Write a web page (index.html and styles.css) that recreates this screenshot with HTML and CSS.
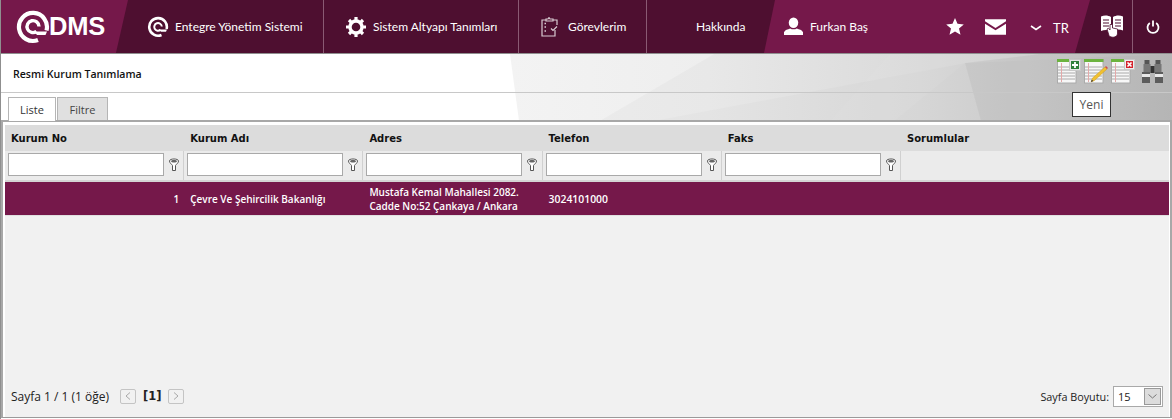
FILE: index.html
```html
<!DOCTYPE html>
<html lang="tr">
<head>
<meta charset="utf-8">
<title>Resmi Kurum Tanımlama</title>
<link rel="stylesheet" href="styles.css">
</head>
<body>
<header class="topbar">
  <a class="logo"><svg class="logo-mark" width="34" height="34" viewBox="0 0 34 34" fill="none" stroke="#fff"><path d="M22 30A14 14 0 1 1 30.500 20.500" stroke-width="4.200"/><path d="M20.500 21.500A6 6 0 1 1 23 16.500" stroke-width="3.400"/><path d="M18 21.500h13l-1.500 3.500H21z" fill="#fff" stroke="none"/></svg><span class="logo-text">DMS</span></a>
  <nav class="mainnav">
    <a class="navitem nav-a"><svg width="22" height="22" viewBox="0 0 22 22" fill="none" stroke="#fff"><path d="M14.500 19A8.800 8.800 0 1 1 19.600 13" stroke-width="2.600"/><path d="M13.500 13.800A3.800 3.800 0 1 1 14.800 10.500" stroke-width="2"/><path d="M11.500 13.500h8.500l-1 2.300h-5z" fill="#fff" stroke="none"/></svg><span>Entegre Yönetim Sistemi</span></a>
    <a class="navitem nav-b"><svg width="20" height="20" viewBox="0 0 20 20"><circle cx="10" cy="10" r="6" fill="none" stroke="#fff" stroke-width="3.400"/><g stroke="#fff" stroke-width="3.200"><path d="M10 0v4M10 16v4M0 10h4M16 10h4M3 3l2.800 2.800M14.200 14.200L17 17M3 17l2.800-2.800M14.200 5.800L17 3"/></g></svg><span>Sistem Altyapı Tanımları</span></a>
    <a class="navitem nav-c"><svg width="18" height="20" viewBox="0 0 18 20" fill="none" stroke="#d9ccd3" stroke-width="1.200"><path d="M5 3H1v16h13v-6M12 3h4v5M5 4V2h2l1-1.400 1 1.400h3v2z"/><path d="M3.500 6.500h1.500M3.500 10h1.500M3.500 14h1.500" stroke-width="1.500"/><path d="M10 11.500l2 2 4-4"/></svg><span>Görevlerim</span></a>
    <a class="navitem nav-d"><span>Hakkında</span></a>
  </nav>
  <div class="userzone">
    <div class="user"><svg width="19" height="19" viewBox="0 0 20 20" fill="#fff"><ellipse cx="10" cy="6" rx="5" ry="5.500"/><path d="M0 19v-3c1-2.500 4-3 6.500-4 2 1.200 5 1.200 7 0 2.500 1 5.500 1.500 6.500 4v3z"/></svg><span>Furkan Baş</span></div>
    <div class="tools">
      <svg width="18" height="17" viewBox="0 0 18 17" fill="#fff"><path d="M9 0l2.500 5.800 6.300.6-4.800 4.100 1.500 6.200L9 13.400l-5.500 3.300L5 10.500.2 6.400l6.300-.6z"/></svg>
      <svg class="mail" width="21" height="16" viewBox="0 0 22 16" fill="#fff"><path d="M0 0h22v2L11 9 0 2z"/><path d="M0 4.500L11 11.500 22 4.500V16H0z"/></svg>
      <svg class="chev" width="12" height="6" viewBox="0 0 12 6" fill="none" stroke="#fff" stroke-width="1.600"><path d="M1 1l5 3.500L11 1"/></svg>
      <span class="lang">TR</span>
    </div>
  </div>
  <a class="bookbtn"><svg width="24" height="25" viewBox="0 0 24 25"><path d="M1 2.500c3-1.500 7-1.500 10 .5v14c-3-1.500-7-1.500-10 0zM13 3c3-2 7-2 10-.5v14c-3-1.500-7-1.500-10 0z" fill="#fff"/><path d="M3 6h6M3 9h6M3 12h6M15 6h6M15 9h6M15 12h6" stroke="#4e0f30" stroke-width="1.200"/><path d="M7 15l1.500-.8 1.500 1.800V10.500h2.500V14l5 1v5c-1 4-7 4-8.500 1.500z" fill="#fff" stroke="#4e0f30" stroke-width=".8"/></svg></a>
  <a class="powerbtn"><svg width="14" height="14" viewBox="0 0 14 14" fill="none" stroke="#fff" stroke-width="1.800"><path d="M7 .5v6"/><path d="M3.800 3a5.500 5.500 0 1 0 6.400 0"/></svg></a>
</header>

<main class="page">
  <svg class="backdrop" viewBox="0 0 1172 89" width="1172" height="89">
    <defs><linearGradient id="fade" x1="510" x2="1172" y1="0" y2="0" gradientUnits="userSpaceOnUse"><stop offset="0" stop-color="#f3f3f3"/><stop offset=".3" stop-color="#eeeeee"/><stop offset=".62" stop-color="#e0e0e0"/><stop offset="1" stop-color="#c6c6c6"/></linearGradient></defs>
    <path d="M510 0H1172V89H522z" fill="url(#fade)"/>
    <path d="M562 89L714 0H1172V89z" fill="#000" opacity=".025"/>
    <path d="M610 75L965 9 1172 0V89H610z" fill="#000" opacity=".015"/>
    <path d="M811 89L890 0H1040L965 9 868 89z" fill="#fff" opacity=".05"/>
    <path d="M965 9L1040 0H1172V89H987z" fill="#000" opacity=".04"/>
  </svg>
  <div class="titlebar">
    <h1>Resmi Kurum Tanımlama</h1>
    <div class="toolbar">
      <svg width="25" height="25" viewBox="0 0 25 25"><use href="#sheet"/><rect x="12.500" y=".5" width="11" height="11" fill="#e8e8e8" stroke="#c8c8c8"/><rect x="14" y="2" width="8" height="8" fill="#2f7f3a"/><path d="M18 3v6M15 6h6" stroke="#fff" stroke-width="1.800"/></svg>
      <svg width="25" height="25" viewBox="0 0 25 25"><use href="#sheet"/><path d="M7 23l1.500-4L21 8l2 2L10.500 21.500z" fill="#f0c030" stroke="#c59010" stroke-width=".4"/><path d="M7 23l.7-2.300 1.700 1.400z" fill="#333"/><path d="M21 8l1-1 2 2-1 1z" fill="#d24a4a"/></svg>
      <svg width="25" height="25" viewBox="0 0 25 25"><use href="#sheet"/><rect x="13.500" y=".5" width="10" height="10" fill="#eee" stroke="#c8c8c8"/><rect x="15" y="2" width="7" height="7" fill="#d4222c"/><path d="M16.500 3.500l4 4M20.500 3.500l-4 4" stroke="#fff" stroke-width="1.600"/></svg>
      <svg class="bino" width="21" height="23" viewBox="0 0 21 23"><rect x="2.500" y="0" width="5" height="4" fill="#555"/><rect x="13.500" y="0" width="5" height="4" fill="#555"/><rect x="1.500" y="4" width="7" height="9" fill="#777"/><rect x="12.500" y="4" width="7" height="9" fill="#777"/><rect x="0" y="12" width="8" height="11" fill="#5c5c5c"/><rect x="13" y="12" width="8" height="11" fill="#5c5c5c"/><rect x="0" y="14" width="8" height="3" fill="#e8e8e8"/><rect x="13" y="14" width="8" height="3" fill="#e8e8e8"/><rect x="8.500" y="6" width="4" height="7" fill="#333"/></svg>
    </div>
  </div>
  <div class="tabs">
    <a class="tab active">Liste</a>
    <a class="tab">Filtre</a>
  </div>
  <div class="tooltip">Yeni</div>
  <section class="panel">
    <div class="grid">
      <div class="row head">
        <div class="cell">Kurum No</div><div class="cell">Kurum Adı</div><div class="cell">Adres</div><div class="cell">Telefon</div><div class="cell">Faks</div><div class="cell">Sorumlular</div>
      </div>
      <div class="row filters">
        <div class="fcell"><input type="text" aria-label="Kurum No"><svg class="funnel"><use href="#funnel"/></svg></div>
        <div class="fcell"><input type="text" aria-label="Kurum Adı"><svg class="funnel"><use href="#funnel"/></svg></div>
        <div class="fcell"><input type="text" aria-label="Adres"><svg class="funnel"><use href="#funnel"/></svg></div>
        <div class="fcell"><input type="text" aria-label="Telefon"><svg class="funnel"><use href="#funnel"/></svg></div>
        <div class="fcell"><input type="text" aria-label="Faks"><svg class="funnel"><use href="#funnel"/></svg></div>
        <div class="fcell"></div>
      </div>
      <div class="row data">
        <div class="cell num">1</div><div class="cell">Çevre Ve Şehircilik Bakanlığı</div><div class="cell">Mustafa Kemal Mahallesi 2082. Cadde No:52 Çankaya / Ankara</div><div class="cell tel">3024101000</div><div class="cell"></div><div class="cell"></div>
      </div>
    </div>
    <footer class="pager">
      <div class="pages"><span>Sayfa 1 / 1 (1 öğe)</span>
        <button class="pg" aria-label="Önceki"><svg width="6" height="8" viewBox="0 0 6 8" fill="none" stroke="#a8a8a8"><path d="M5 .5L1 4l4 3.500"/></svg></button>
        <b>[1]</b>
        <button class="pg" aria-label="Sonraki"><svg width="6" height="8" viewBox="0 0 6 8" fill="none" stroke="#a8a8a8"><path d="M1 .5L5 4 1 7.500"/></svg></button>
      </div>
      <div class="size"><span>Sayfa Boyutu:</span><div class="select"><span>15</span><i><svg width="9" height="5" viewBox="0 0 9 5" fill="none" stroke="#777"><path d="M.5.500l4 3.500 4-3.500"/></svg></i></div></div>
    </footer>
  </section>
</main>
<svg class="defs" width="0" height="0">
  <defs>
    <g id="sheet"><rect x=".5" y=".5" width="18.500" height="23.500" fill="#f7f7f7" stroke="#aaa"/><rect x="0" y="0" width="19.500" height="3" fill="#6cb33f"/><path d="M1 8h17M1 11h17M1 14h17M1 17h17M1 20h17" stroke="#aaa"/><path d="M4.500 4v19" stroke="#e3a9a9"/></g>
    <g id="funnel"><path d="M.5 3C.5.300 9.500.300 9.500 3 9.500 5 7 6.500 6.500 7.500V12.500h-3V7.500C3 6.500.5 5 .5 3z" fill="#fff" stroke="#555"/><path d="M2 3.300c0-1.700 6-1.700 6 0C8 5 2 5 2 3.300z" fill="#666"/></g>
  </defs>
</svg>
</body>
</html>
```
FILE: styles.css
```css
* { box-sizing: border-box; }
html, body { margin: 0; height: 100%; }
body { width: 1172px; height: 419px; overflow: hidden; background: #fff; font-family: "Open Sans", "Noto Sans", sans-serif; font-size: 12px; color: #1a1a1a; }
.defs { position: absolute; }

.topbar { display: flex; height: 54px; background: #4e0f30; border-bottom: 1px solid #8f8f8f; border-left: 1px solid #8f8f8f; color: #fff; font-family: Lato, "Open Sans", sans-serif; font-size: 12px; position: relative; }
.logo { width: 127px; flex: none; background: #75184a; clip-path: polygon(0 0, 100% 0, 90.500% 100%, 0 100%); display: flex; align-items: center; padding-left: 15px; }
.logo-mark { flex: none; }
.logo-text { font-family: "Liberation Sans", sans-serif; font-weight: 700; font-size: 25.500px; letter-spacing: -.2px; margin-left: -1px; }
.mainnav { display: flex; height: 100%; }
.navitem { display: flex; align-items: center; border-right: 1px solid #8a5a73; color: #fff; height: 100%; }
.nav-a { width: 196px; padding-left: 19px; gap: 6px; }
.nav-b { width: 195px; padding-left: 22px; gap: 7px; }
.nav-c { width: 128px; padding-left: 22px; gap: 9px; }
.nav-d { width: 118px; padding-left: 49px; border-right: 0; }
.userzone { width: 326px; flex: none; background: #75184a; clip-path: polygon(11px 0, 100% 0, 311px 100%, 0 100%); display: flex; align-items: center; padding-left: 20px; margin-left: -1px; }
.user { display: flex; align-items: center; gap: 7px; width: 162px; }
.tools { display: flex; align-items: center; }
.mail { margin-left: 21px; }
.chev { margin-left: 24px; margin-top: 3px; }
.lang { margin-left: 11px; margin-top: 3px; font-size: 13px; }
.bookbtn { width: 43px; flex: none; display: flex; align-items: center; justify-content: center; border-right: 1px solid #8a5a73; padding: 0 0 0 2px; }
.powerbtn { flex: 1; display: flex; align-items: center; justify-content: center; }

.page { position: relative; height: 365px; border-left: 1px solid #8f8f8f; }
.backdrop { position: absolute; left: -1px; top: 0; z-index: -1; }
.titlebar { display: flex; align-items: center; justify-content: space-between; height: 39px; border-bottom: 1px solid #c8c8c8; padding: 0 0 0 12px; }
h1 { margin: 1px 0 0; font-size: 10.600px; font-weight: 600; color: #111; }
.toolbar { display: flex; align-items: center; gap: 2px; padding: 0 9px 0 0; margin-top: -4px; }
.bino { margin-left: 4px; }
.tabs { display: flex; gap: 1px; padding: 4px 0 0 7px; height: 27px; }
.tab { display: flex; align-items: center; justify-content: center; height: 23px; border: 1px solid #b5b5b5; border-bottom: 0; background: #e0e0e0; width: 51px; color: #444; font-size: 11px; }
.tab.active { background: #fff; width: 48px; color: #333; height: 24px; position: relative; z-index: 1; }
.tooltip { position: absolute; left: 1071px; top: 38px; width: 39px; height: 25px; border: 1px solid #333; background: #fff; display: flex; align-items: center; justify-content: center; color: #555; font-size: 12px; z-index: 2; }

.panel { height: 298px; border-top: 2px solid #a8a8a8; border-left: 2px solid #a8a8a8; border-right: 2px solid #a8a8a8; border-bottom: 1px solid #9a9a9a; background: #fff; display: flex; flex-direction: column; padding: 3px 1px 0 2px; }
.grid { flex: 1; background: #f1f1f1; }
.row { display: grid; grid-template-columns: repeat(5, 179.200px) 1fr; }
.head { height: 26px; background: #dcdcdc; align-items: center; font-family: "DejaVu Sans", Verdana, sans-serif; font-weight: 700; font-size: 10px; color: #111; }
.head .cell { padding-left: 6px; }
.filters { height: 31px; background: #ebebeb; border-bottom: 2px solid #d4d4d4; }
.fcell { display: flex; align-items: center; padding: 0 0 3px 3px; gap: 5px; border-right: 1px solid #d0d0d0; }
.fcell:last-child { border-right: 0; }
.fcell input { width: 156px; height: 23px; border: 1px solid #a9a9a9; background: #fff; margin: 0; padding: 0; flex: none; }
.funnel { width: 10px; height: 13px; flex: none; }
.data { height: 34px; background: #75184a; color: #fff; align-items: center; font-size: 10px; font-weight: 600; line-height: 14px; border-bottom: 1px solid #e0e0e0; }
.data .cell { padding-left: 6px; padding-right: 14px; }
.data .num { text-align: right; padding-right: 5px; }
.data .tel { font-size: 10.400px; }
.pager { height: 40px; background: #f1f1f1; display: flex; align-items: center; justify-content: space-between; padding: 0 6px 2px 6px; }
.pages { display: flex; align-items: center; font-size: 12px; color: #222; }
.pages span { width: 100px; }
.pg { width: 16px; height: 15px; padding: 0; display: flex; align-items: center; justify-content: center; background: #f1f1f1; border: 1px solid #c4c4c4; border-radius: 2px; margin-left: 9px; }
.pages b { width: 18px; margin: 0 0 0 7px; font-size: 11.500px; font-family: "DejaVu Sans", sans-serif; }
.pages b + .pg { margin-left: 7px; }
.size { display: flex; align-items: center; gap: 4px; font-size: 10.800px; color: #222; }
.select { width: 50px; height: 21px; border: 1px solid #a9a9a9; background: #fff; display: flex; justify-content: space-between; align-items: center; padding: 0 1px 0 4px; font-size: 11px; }
.select i { width: 17px; height: 17px; background: #dcdcdc; border: 1px solid #999; display: flex; align-items: center; justify-content: center; }
```
